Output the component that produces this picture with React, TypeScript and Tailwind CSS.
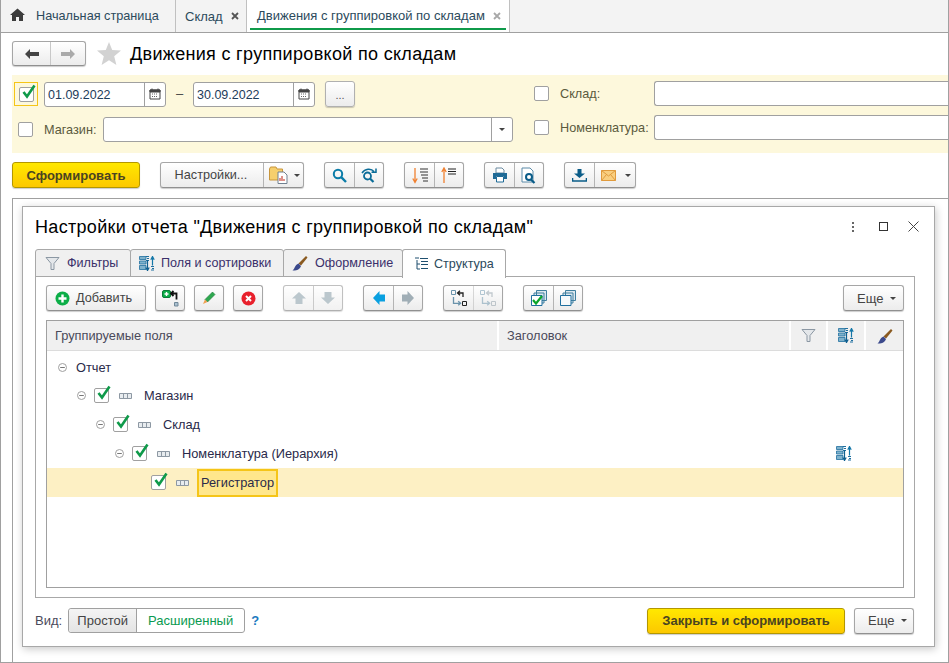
import type { ReactNode } from "react";

function Check() {
  return (
    <svg width="17" height="17" viewBox="0 0 17 17" className="block">
      <path d="M3.5 8 L7 12.5 L14.5 1.5" fill="none" stroke="#0f9a4a" strokeWidth="2.6" />
    </svg>
  );
}

function Checkbox({ checked, className = "" }: { checked?: boolean; className?: string }) {
  return (
    <div className={`w-[15px] h-[15px] shrink-0 rounded-[2px] border border-[#a0a0a0] bg-white ${className}`}>
      {checked && (
        <div className="-mt-[4px] ml-[0px]">
          <Check />
        </div>
      )}
    </div>
  );
}

function Caret() {
  return (
    <svg width="6" height="3" viewBox="0 0 6 3" className="block shrink-0">
      <path d="M0 0 H6 L3 3 Z" fill="#444" />
    </svg>
  );
}

function Cross({ color }: { color: string }) {
  return (
    <svg width="8" height="8" viewBox="0 0 8 8" className="block shrink-0">
      <path d="M1 1 L7 7 M7 1 L1 7" stroke={color} strokeWidth="1.8" />
    </svg>
  );
}

function Calendar() {
  return (
    <svg width="12" height="12" viewBox="0 0 12 12" className="block">
      <path d="M1 2 H11 V11 H1 Z" fill="none" stroke="#444" />
      <path d="M1 2 H11 V4 H1 Z M3 0.5 V2 M9 0.5 V2" fill="#444" stroke="#444" />
      <path d="M3 6 H9 M3 8.5 H9" stroke="#666" strokeDasharray="1 1" />
    </svg>
  );
}

function Group({ children, className = "" }: { children: ReactNode; className?: string }) {
  return (
    <div className={`flex h-[26px] shrink-0 rounded-[3px] border border-[#a6a6a6] border-b-[#909090] bg-gradient-to-b from-white to-[#ececec] shadow-[0_1px_1px_rgba(0,0,0,0.2)] ${className}`}>
      {children}
    </div>
  );
}

function Cell({ children, className = "" }: { children: ReactNode; className?: string }) {
  return (
    <div className={`flex w-[29px] items-center justify-center border-l border-[#b4b4b4] first:border-l-0 ${className}`}>
      {children}
    </div>
  );
}

function DateField({ value, className = "" }: { value: string; className?: string }) {
  return (
    <div className={`flex h-[25px] w-[122px] shrink-0 rounded-[3px] border border-[#a0a0a0] bg-white ${className}`}>
      <div className="flex-1 pl-[3px] leading-[25px] text-[12.5px] text-[#1d3c5a]">{value}</div>
      <div className="flex w-[21px] items-center justify-center border-l border-[#a0a0a0]">
        <Calendar />
      </div>
    </div>
  );
}

function Funnel({ color = "#8b97a3" }: { color?: string }) {
  return (
    <svg width="15" height="15" viewBox="0 0 15 15" className="block shrink-0">
      <path d="M1 1.5 H14 L9 7.5 V13.5 H6 V7.5 Z" fill="#e4e7ea" stroke={color} />
    </svg>
  );
}

function FieldsIcon() {
  return (
    <svg width="16" height="15" viewBox="0 0 16 15" className="block shrink-0">
      <path d="M0.5 0.5 H7 V3.5 H0.5 Z M0.5 5 H7 V8 H0.5 Z M0.5 9.5 H7 V13.5 H0.5 Z" fill="#7fb2cc" stroke="#1f6f9f" strokeWidth="0.8" />
      <path d="M7 0 H10 V1 H7 Z M8 2 H10 V3 H8 Z M7 4 H10 V5 H7 Z M12 10 H15 V11 H12 Z M13 12 H15 V13 H13 Z M12 13.5 H15 V14.5 H12 Z" fill="#1f6f9f" />
      <path d="M8.5 4 V14 M6.8 11.5 L8.5 14.5 L10.2 11.5" fill="none" stroke="#0f5f8f" strokeWidth="1.2" />
      <path d="M13.5 9.5 V1.5 M11.8 3.8 L13.5 0.5 L15.2 3.8" fill="none" stroke="#1477a8" strokeWidth="1.2" />
    </svg>
  );
}

function Brush() {
  return (
    <svg width="16" height="16" viewBox="0 0 16 16" className="block shrink-0">
      <path d="M6.5 8.5 L14 1 L15.5 2.4 L9 10.5 Z" fill="#8a5a20" />
      <path d="M0.5 15.5 C3 14 2.5 10 6.5 8.5 L9 11 C8 14.5 4 16 0.5 15.5 Z" fill="#3c4a8c" />
    </svg>
  );
}

function TreeNode() {
  return (
    <svg width="13" height="6" viewBox="0 0 13 6" className="block shrink-0">
      <path d="M0.5 0.5 H12.5 V5.5 H0.5 Z M4.5 0.5 V5.5 M8.5 0.5 V5.5" fill="#e8ecef" stroke="#8d98a3" />
    </svg>
  );
}

function Minus() {
  return (
    <svg width="9" height="9" viewBox="0 0 9 9" className="block shrink-0">
      <circle cx="4.5" cy="4.5" r="4" fill="#fff" stroke="#a0a0a0" />
      <path d="M2.2 4.5 H6.8" stroke="#777" />
    </svg>
  );
}

function Arrow({ dir, color }: { dir: "up" | "down" | "left" | "right"; color: string }) {
  const rotate = { up: "rotate-0", down: "rotate-180", left: "-rotate-90", right: "rotate-90" }[dir];
  return (
    <svg width="14" height="12" viewBox="0 0 14 12" className={`block ${rotate}`}>
      <path d="M7 0 L14 6.5 H10.5 V12 H3.5 V6.5 H0 Z" fill={color} />
    </svg>
  );
}

function Branch({ color, back }: { color: string; back: string }) {
  return (
    <svg width="16" height="16" viewBox="0 0 16 16" className="block">
      <path d="M0.5 0.5 H4.5 V4.5 H0.5 Z" fill="none" stroke={back} />
      <path d="M11.5 11.5 H15.5 V15.5 H11.5 Z" fill="none" stroke={color} />
      <path d="M12 7 V3 H7 M9 0.8 L6.5 3 L9 5.2" fill="none" stroke={color} strokeWidth="1.3" />
      <path d="M2.5 7 V13.3 H9 M7.2 11.3 L9.6 13.3 L7.2 15.3" fill="none" stroke={back} strokeWidth="1.3" />
    </svg>
  );
}

function Stack({ checked }: { checked?: boolean }) {
  return (
    <svg width="16" height="16" viewBox="0 0 16 16" className="block">
      <path d="M5.5 0.5 H15.5 V10.5 H5.5 Z M3 3 H13 V13 H3 Z" fill="#dbe7ee" stroke="#3f7f9f" />
      <path d="M0.5 5.5 H11 V15.5 H0.5 Z" fill={checked ? "#fff" : "#f5f9fb"} stroke="#1f6f9f" />
      {checked && <path d="M2 10 L5 13.5 L11 6" fill="none" stroke="#0aa52a" strokeWidth="2.2" />}
    </svg>
  );
}

const rows = [
  { label: "Магазин", margin: "ml-[30px]" },
  { label: "Склад", margin: "ml-[49px]" },
  { label: "Номенклатура (Иерархия)", margin: "ml-[68px]", fields: true },
];

export default function App() {
  return (
    <div className="flex h-[663px] w-[949px] flex-col overflow-hidden border border-t-0 border-[#a0a0a0] bg-white font-['Liberation_Sans',sans-serif] text-[13px] text-[#333]">
      {/* tabs */}
      <div className="-ml-px flex h-[33px] shrink-0 border-b border-[#a0a0a0] bg-[#f3f3f3]">
        <div className="flex w-[176px] items-center border-r border-[#c0c0c0] pl-[10px]">
          <svg width="15" height="13" viewBox="0 0 15 13" className="mb-[3px] block">
            <path d="M7.5 0.5 L15 7 H13 V13 H9 V9 H6 V13 H2 V7 H0 Z" fill="#3c3c3c" />
          </svg>
          <span className="ml-[11px] pt-[1px] text-[12.7px] text-[#2c4a5c]">Начальная страница</span>
        </div>
        <div className="flex w-[71px] items-center border-r border-[#c0c0c0] pl-[9px]">
          <span className="pt-[1px] text-[#2c4a5c]">Склад</span>
          <div className="ml-[8px]">
            <Cross color="#555" />
          </div>
        </div>
        <div className="flex w-[263px] flex-col border-r border-[#c0c0c0] bg-white px-[3px]">
          <div className="flex flex-1 items-center pt-[4px] pl-[7px]">
            <span className="text-[#2c4a5c]">Движения с группировкой по складам</span>
            <div className="ml-[8px]">
              <Cross color="#a8a8a8" />
            </div>
          </div>
          <div className="mb-[2px] h-[2px] bg-[#0f9a4a]" />
        </div>
      </div>

      {/* page title */}
      <div className="mt-[8px] ml-[11px] flex h-[25px] shrink-0 items-center">
        <Group className="w-[74px] !h-[25px]">
          <div className="flex w-[37px] items-center justify-center">
            <svg width="14" height="10" viewBox="0 0 14 10" className="block">
              <path d="M5 0 V3 H14 V7 H5 V10 L0 5 Z" fill="#444" />
            </svg>
          </div>
          <div className="flex flex-1 items-center justify-center border-l border-[#c8c8c8]">
            <svg width="14" height="10" viewBox="0 0 14 10" className="block">
              <path d="M9 0 V3 H0 V7 H9 V10 L14 5 Z" fill="#aaa" />
            </svg>
          </div>
        </Group>
        <svg width="24" height="23" viewBox="0 0 24 23" className="ml-[11px] block">
          <path d="M12 0 L15.2 8 L24 8.6 L17.2 14.2 L19.4 23 L12 18.2 L4.6 23 L6.8 14.2 L0 8.6 L8.8 8 Z" fill="#d2d2d2" />
        </svg>
        <div className="ml-[9px] pt-[2px] text-[18px] tracking-[0.32px] text-black">Движения с группировкой по складам</div>
      </div>

      {/* filters */}
      <div className="mt-[9px] ml-[11px] flex h-[78px] shrink-0 bg-[#fdf8dc]">
        <div className="w-[522px] shrink-0">
          <div className="mt-[6px] flex h-[26px] items-center">
            <div className="ml-[2px] flex h-[24px] w-[24px] items-center justify-center border border-[#f5c518]">
              <Checkbox checked />
            </div>
            <DateField value="01.09.2022" className="ml-[6px]" />
            <span className="ml-[10px] w-[17px] text-[#444]">–</span>
            <DateField value="30.09.2022" />
            <div className="ml-[10px] flex h-[26px] w-[30px] items-center justify-center rounded-[3px] border border-[#b0b0b0] bg-gradient-to-b from-white to-[#ececec] pt-[2px] text-[11px] text-[#555] shadow-[0_1px_1px_rgba(0,0,0,0.2)]">
              ...
            </div>
          </div>
          <div className="mt-[10px] flex h-[25px] items-center">
            <Checkbox className="ml-[6px]" />
            <span className="ml-[11px] w-[59px] pt-[2px] text-[12.7px] text-[#5a5a3c]">Магазин:</span>
            <div className="flex h-[25px] w-[410px] rounded-[3px] border border-[#a0a0a0] bg-white">
              <div className="flex-1" />
              <div className="flex w-[21px] items-center justify-center border-l border-[#a0a0a0]">
                <Caret />
              </div>
            </div>
          </div>
        </div>
        <div className="flex-1">
          <div className="mt-[6px] flex h-[25px] items-center">
            <Checkbox />
            <span className="ml-[11px] w-[94px] pt-[2px] text-[12.7px] text-[#5a5a3c]">Склад:</span>
            <div className="h-[25px] flex-1 rounded-l-[3px] border-y border-l border-[#a0a0a0] bg-white" />
          </div>
          <div className="mt-[9px] flex h-[25px] items-center">
            <Checkbox />
            <span className="ml-[11px] w-[94px] pt-[2px] text-[12.7px] text-[#5a5a3c]">Номенклатура:</span>
            <div className="h-[25px] flex-1 rounded-l-[3px] border-y border-l border-[#a0a0a0] bg-white" />
          </div>
        </div>
      </div>

      {/* report toolbar */}
      <div className="mt-[9px] ml-[11px] flex h-[26px] shrink-0">
        <div className="flex w-[128px] shrink-0 items-center justify-center rounded-[3px] border border-[#b39700] bg-gradient-to-b from-[#ffe800] to-[#fcc800] pt-[2px] font-bold text-[#4a4420] shadow-[0_1px_1px_rgba(0,0,0,0.2)]">
          Сформировать
        </div>
        <Group className="ml-[20px]">
          <div className="flex w-[102px] items-center justify-center pt-[2px] pr-[2px] text-[12.7px] text-[#444]">Настройки...</div>
          <div className="flex w-[40px] items-center border-l border-[#b4b4b4] pl-[5px]">
            <svg width="19" height="18" viewBox="0 0 19 18" className="block shrink-0">
              <path d="M0.5 3 L1.5 1 H7 L8 3 H13.5 V14 H0.5 Z" fill="#f6cf6d" stroke="#c8963c" />
              <path d="M9 6 H15 L18 9 V17.5 H9 Z" fill="#fff" stroke="#708090" />
              <path d="M11 15 V12 M13 15 V10 M15 15 V13" stroke="#c8483c" strokeWidth="1.2" />
            </svg>
            <div className="ml-[6px]">
              <Caret />
            </div>
          </div>
        </Group>
        <Group className="ml-[20px]">
          <Cell>
            <svg width="15" height="15" viewBox="0 0 15 15" className="block">
              <circle cx="6" cy="6" r="4.2" fill="none" stroke="#0a7ca8" strokeWidth="2" />
              <path d="M9.2 9.2 L14 14" stroke="#0a7ca8" strokeWidth="2.4" />
            </svg>
          </Cell>
          <Cell>
            <svg width="17" height="15" viewBox="0 0 17 15" className="block">
              <circle cx="6.5" cy="8" r="3.5" fill="none" stroke="#0a6c98" strokeWidth="1.8" />
              <path d="M9 10.5 L12.5 14" stroke="#0a6c98" strokeWidth="2.2" />
              <path d="M1 5 C4 0.5 10 0 13 3.5 M10.5 4.2 H15 V0.5" fill="none" stroke="#0a6c98" strokeWidth="1.5" />
            </svg>
          </Cell>
        </Group>
        <Group className="ml-[20px]">
          <Cell>
            <svg width="16" height="17" viewBox="0 0 16 17" className="block">
              <path d="M3 1 V14 M0.8 11.5 L3 15.5 L5.2 11.5" fill="none" stroke="#f08030" strokeWidth="1.3" />
              <path d="M8 2 H16 M8 5 H16 M9 8 H16 M10 11 H16 M11 14 H16" stroke="#333" />
            </svg>
          </Cell>
          <Cell>
            <svg width="16" height="17" viewBox="0 0 16 17" className="block">
              <path d="M3 16 V2 M0.8 5 L3 1 L5.2 5" fill="none" stroke="#f08030" strokeWidth="1.3" />
              <path d="M7 2 H15 M7 4.5 H15 M7 7 H15" stroke="#222" strokeWidth="1.2" />
            </svg>
          </Cell>
        </Group>
        <Group className="ml-[20px]">
          <Cell>
            <svg width="16" height="16" viewBox="0 0 16 16" className="block">
              <path d="M4 1 H10 L12 3 V6 H4 Z" fill="#fff" stroke="#6a8aa0" />
              <path d="M1 6 H15 V12 H12 V9 H4 V12 H1 Z" fill="#1f6a96" />
              <path d="M4.5 9.5 H11.5 V15 H4.5 Z" fill="#fff" stroke="#1f6a96" />
            </svg>
          </Cell>
          <Cell>
            <svg width="16" height="17" viewBox="0 0 16 17" className="block">
              <path d="M1 1 H9 L12 4 V15 H1 Z" fill="#fff" stroke="#5a8aa8" />
              <circle cx="8" cy="10" r="3" fill="#fff" stroke="#0a5c88" strokeWidth="2" />
              <path d="M10 12.5 L13.5 16" stroke="#0a5c88" strokeWidth="2.2" />
            </svg>
          </Cell>
        </Group>
        <Group className="ml-[20px]">
          <Cell>
            <svg width="15" height="13" viewBox="0 0 15 13" className="block">
              <path d="M5.5 0 H9.5 V4.5 H13 L7.5 9 L2 4.5 H5.5 Z" fill="#0a5c88" />
              <path d="M0.5 9 V12 H14.5 V9" fill="none" stroke="#0a5c88" strokeWidth="1.6" />
            </svg>
          </Cell>
          <div className="flex w-[41px] items-center border-l border-[#b4b4b4] pl-[6px]">
            <svg width="15" height="11" viewBox="0 0 15 11" className="block shrink-0">
              <path d="M0.5 0.5 H14.5 V10.5 H0.5 Z" fill="#f9cf80" stroke="#e09a3c" />
              <path d="M0.5 0.5 L7.5 6 L14.5 0.5 M0.5 10.5 L5.5 4.5 M14.5 10.5 L9.5 4.5" fill="none" stroke="#e09a3c" />
            </svg>
            <div className="ml-[9px]">
              <Caret />
            </div>
          </div>
        </Group>
      </div>

      {/* report area */}
      <div className="mt-[10px] ml-[11px] flex min-h-0 flex-1 border-t border-l border-[#a0a0a0] pt-[7px] pl-[9px]">
        {/* dialog */}
        <div className="flex h-[441px] w-[913px] shrink-0 flex-col border border-[#a8a8a8] bg-white shadow-[1px_2px_8px_rgba(0,0,0,0.22)]">
          <div className="mt-[7px] ml-[12px] flex h-[25px] shrink-0 items-center">
            <div className="flex-1 pt-[1px] text-[18px] tracking-[0.32px] text-black">Настройки отчета "Движения с группировкой по складам"</div>
            <div className="flex w-[14px] flex-col items-center gap-[2px]">
              <div className="h-[2px] w-[2px] bg-[#666]" />
              <div className="h-[2px] w-[2px] bg-[#666]" />
              <div className="h-[2px] w-[2px] bg-[#666]" />
            </div>
            <div className="ml-[19px] h-[9px] w-[9px] border border-[#333]" />
            <svg width="11" height="11" viewBox="0 0 11 11" className="mr-[15px] ml-[20px] block">
              <path d="M0.5 0.5 L10.5 10.5 M10.5 0.5 L0.5 10.5" stroke="#444" />
            </svg>
          </div>

          {/* dialog tabs */}
          <div className="mt-[10px] ml-[12px] flex h-[27px] shrink-0 text-[12.6px]">
            <div className="flex h-[28px] w-[96px] items-center rounded-t-[3px] border border-[#a8a8a8] bg-[#f0f0f0] pl-[9px]">
              <Funnel />
              <span className="ml-[7px] text-[#3a2f6a]">Фильтры</span>
            </div>
            <div className="-ml-px flex h-[28px] w-[154px] items-center rounded-t-[3px] border border-[#a8a8a8] bg-[#f0f0f0] pl-[8px]">
              <FieldsIcon />
              <span className="ml-[6px] text-[#3a2f6a]">Поля и сортировки</span>
            </div>
            <div className="-ml-px flex h-[28px] w-[120px] items-center rounded-t-[3px] border border-[#a8a8a8] bg-[#f0f0f0] pl-[8px]">
              <Brush />
              <span className="ml-[7px] text-[#3a2f6a]">Оформление</span>
            </div>
            <div className="relative z-10 -ml-px flex h-[29px] w-[104px] items-center rounded-t-[3px] border border-b-0 border-[#a8a8a8] bg-white pl-[11px]">
              <svg width="14" height="14" viewBox="0 0 14 14" className="block shrink-0">
                <path d="M1 1 H5 M3 3 V12 H6 M3 7 H6" fill="none" stroke="#1f4f6f" />
                <path d="M7 4.5 H14 M7 7.5 H14 M7 11.5 H14 M6 1.5 H14" stroke="#1f4f6f" strokeWidth="1.2" />
              </svg>
              <span className="ml-[6px] text-[#2c4a5c]">Структура</span>
            </div>
          </div>

          {/* tab panel */}
          <div className="ml-[12px] flex h-[322px] w-[880px] shrink-0 flex-col border border-[#a8a8a8] px-[10px] pt-[8px]">
            <div className="flex h-[26px] shrink-0">
              <Group className="w-[100px] items-center pl-[8px]">
                <svg width="15" height="15" viewBox="0 0 15 15" className="block shrink-0">
                  <circle cx="7.5" cy="7.5" r="7" fill="#0cae48" />
                  <path d="M7.5 3.5 V11.5 M3.5 7.5 H11.5" stroke="#fff" strokeWidth="2.4" />
                </svg>
                <span className="ml-[6px] pt-[2px] text-[12.7px] text-[#444]">Добавить</span>
              </Group>
              <Group className="ml-[9px] w-[30px] items-center justify-center">
                <svg width="17" height="17" viewBox="0 0 17 17" className="block">
                  <rect x="0.5" y="0.5" width="8" height="7" rx="1.5" fill="#0cae48" stroke="#0a7a38" />
                  <path d="M4.5 2 V6 M2.5 4 H6.5" stroke="#fff" strokeWidth="1.4" />
                  <path d="M9 3.5 H14.5 V9.5 M11.5 1 L9 3.5 L11.5 6" fill="none" stroke="#111" strokeWidth="1.8" />
                  <path d="M12.5 12.5 H16 V16 H12.5 Z" fill="#aac0d0" stroke="#708898" />
                </svg>
              </Group>
              <Group className="ml-[9px] w-[30px] items-center justify-center">
                <svg width="14" height="14" viewBox="0 0 14 14" className="block">
                  <path d="M3 8.5 L10.5 1 L13 3.5 L5.5 11 Z" fill="#2ea84f" stroke="#1b7a38" strokeWidth="0.6" />
                  <path d="M3 8.5 L5.5 11 L1 13 Z" fill="#f0a050" />
                </svg>
              </Group>
              <Group className="ml-[9px] w-[30px] items-center justify-center">
                <svg width="15" height="15" viewBox="0 0 15 15" className="block">
                  <circle cx="7.5" cy="7.5" r="7" fill="#e8202c" />
                  <path d="M5 5 L10 10 M10 5 L5 10" stroke="#fff" strokeWidth="2" />
                </svg>
              </Group>
              <Group className="ml-[20px] opacity-70">
                <Cell><Arrow dir="up" color="#9fb0b8" /></Cell>
                <Cell><Arrow dir="down" color="#9fb0b8" /></Cell>
              </Group>
              <Group className="ml-[20px]">
                <Cell><Arrow dir="left" color="#0aa0e0" /></Cell>
                <Cell><Arrow dir="right" color="#a0aeb6" /></Cell>
              </Group>
              <Group className="ml-[20px]">
                <Cell><Branch color="#222" back="#6a93ab" /></Cell>
                <Cell className="opacity-50"><Branch color="#8a9aa5" back="#6a93ab" /></Cell>
              </Group>
              <Group className="ml-[20px]">
                <Cell><Stack checked /></Cell>
                <Cell><Stack /></Cell>
              </Group>
              <Group className="ml-auto w-[61px] items-center pl-[13px]">
                <span className="pt-[2px] text-[#444]">Еще</span>
                <div className="ml-[7px]">
                  <Caret />
                </div>
              </Group>
            </div>

            {/* tree table */}
            <div className="mt-[9px] flex h-[268px] w-[858px] flex-col border border-[#a0a0a0]">
              <div className="flex h-[30px] shrink-0 border-b border-[#dcdcdc] bg-[#f0f0f0] text-[12.8px] text-[#4a4a5a]">
                <div className="flex w-[452px] items-center border-r-2 border-white pl-[8px]">Группируемые поля</div>
                <div className="flex w-[290px] items-center pl-[8px]">Заголовок</div>
                <div className="flex w-[37px] items-center justify-center border-l-2 border-white"><Funnel /></div>
                <div className="flex w-[38px] items-center justify-center border-l-2 border-white"><FieldsIcon /></div>
                <div className="flex flex-1 items-center justify-center border-l-2 border-white"><Brush /></div>
              </div>
              <div className="pt-[1px] text-[12.8px]">
                <div className="flex h-[29px] items-center pt-[2px] pl-[11px] text-[#2a2a4a]">
                  <Minus />
                  <span className="ml-[9px]">Отчет</span>
                </div>
                {rows.map((r) => (
                  <div key={r.label} className="flex h-[29px] items-center text-[#2a2a4a]">
                    <div className={`flex items-center ${r.margin}`}>
                      <Minus />
                      <Checkbox checked className="ml-[8px]" />
                      <div className="ml-[10px]"><TreeNode /></div>
                      <span className="ml-[12px]">{r.label}</span>
                    </div>
                    {r.fields && (
                      <div className="mr-[51px] ml-auto"><FieldsIcon /></div>
                    )}
                  </div>
                ))}
                <div className="flex h-[29px] items-center bg-[#fdf0c4] pl-[104px] text-[#2a2a4a]">
                  <Checkbox checked />
                  <div className="ml-[10px]"><TreeNode /></div>
                  <div className="ml-[8px] flex h-[28px] w-[81px] items-center border-2 border-[#f5c518] bg-[#ffe78c] pl-[2px]">Регистратор</div>
                </div>
              </div>
            </div>
          </div>

          {/* dialog footer */}
          <div className="mt-[9px] ml-[12px] flex h-[27px] shrink-0 items-center">
            <span className="text-[#4a4a5a]">Вид:</span>
            <div className="ml-[6px] flex h-[25px] w-[177px] rounded-[3px] border border-[#a0a0a0]">
              <div className="flex w-[68px] items-center justify-center rounded-l-[3px] border-r border-[#a0a0a0] bg-gradient-to-b from-[#f4f4f4] to-[#e4e4e4] text-[#444]">Простой</div>
              <div className="flex flex-1 items-center justify-center text-[#0a9a50]">Расширенный</div>
            </div>
            <span className="ml-[6px] font-bold text-[#1a7ac0]">?</span>
            <div className="ml-[388px] flex h-[26px] w-[198px] shrink-0 items-center justify-center rounded-[3px] border border-[#b39700] bg-gradient-to-b from-[#ffe800] to-[#fcc800] font-bold text-[#4a4420] shadow-[0_1px_1px_rgba(0,0,0,0.2)]">
              Закрыть и сформировать
            </div>
            <Group className="ml-[9px] w-[60px] items-center pl-[13px]">
              <span className="text-[#444]">Еще</span>
              <div className="ml-[6px]">
                <Caret />
              </div>
            </Group>
          </div>
        </div>
      </div>
    </div>
  );
}
